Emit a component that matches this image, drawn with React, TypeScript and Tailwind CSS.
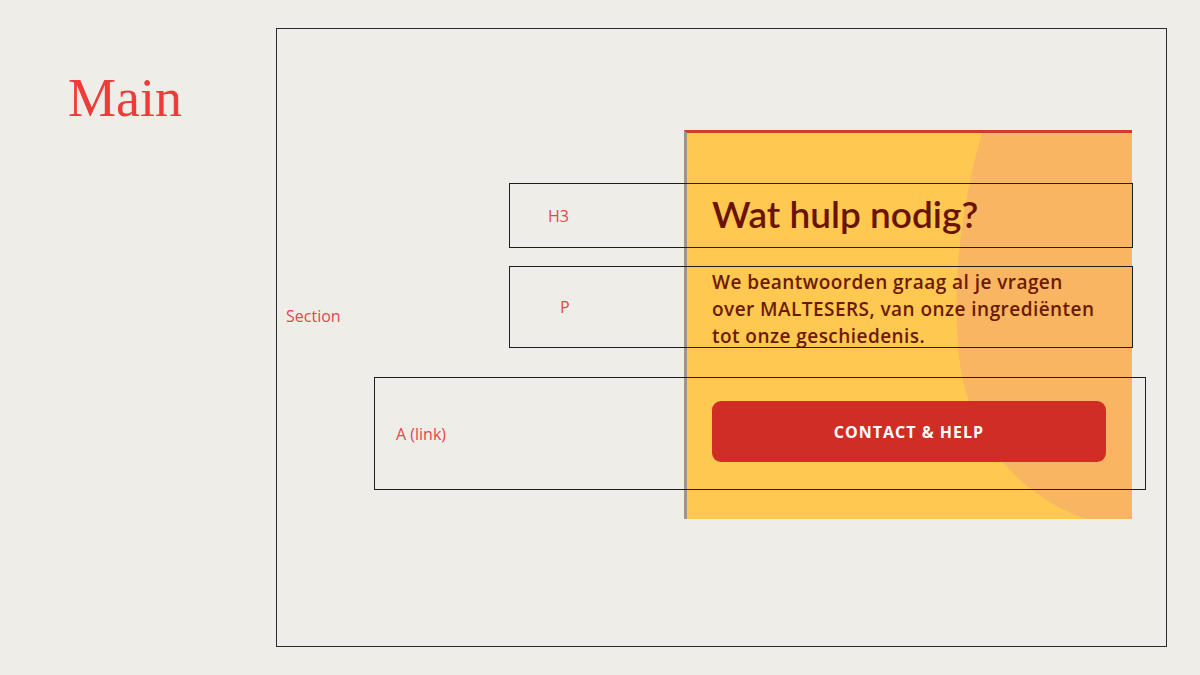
const label = "font-['Open_Sans',sans-serif] text-[16px] leading-none text-[#e4474b]";

function HelpCard() {
  return (
    <div className="relative w-[448px] h-[389px] bg-[#fec851] border-l-[3px] border-l-[#9b958e] border-t-[3px] border-t-[#d23b2b] overflow-hidden">
      <svg className="absolute inset-0" width="448" height="389" viewBox="0 0 448 389">
        <path
          d="M 448 -3 L 299 -3 C 280 60, 268 140, 274 210 C 278 290, 322 360, 410 389 L 448 389 Z"
          transform="translate(-3 0)"
          fill="#f8b562"
        />
      </svg>
      <div className="relative flex flex-col pl-[25px] pt-[59px]">
        <h3 className="font-['Lato',sans-serif] text-[37px] leading-[44px] font-semibold text-[#6b1300]">Wat hulp nodig?</h3>
        <p className="mt-[33px] w-[398px] font-['Open_Sans',sans-serif] text-[19px] leading-[27px] font-semibold tracking-[0.45px] text-[#6b1a00]">
          We beantwoorden graag al je vragen over MALTESERS, van onze ingrediënten tot onze geschiedenis.
        </p>
        <a
          href="#"
          className="mt-[51px] flex h-[61px] w-[394px] items-center justify-center rounded-[9px] bg-[#d02d25] font-['Open_Sans',sans-serif] text-[16px] font-bold tracking-[1px] text-white"
        >
          CONTACT &amp; HELP
        </a>
      </div>
    </div>
  );
}

export default function App() {
  return (
    <div className="flex h-[675px] w-[1200px] overflow-hidden bg-[#efede7]">
      <div className="w-[276px] shrink-0 pl-[68px] pt-[71px]">
        <h1 className="font-['Liberation_Serif',serif] text-[54px] leading-none text-[#ef3b39]">Main</h1>
      </div>
      <section className="relative mt-[28px] h-[619px] w-[891px] shrink-0 border border-[#2b2b2b]">
        <span className={`absolute left-[9px] top-[279px] ${label}`}>Section</span>
        <div className="ml-[407px] mt-[101px]">
          <HelpCard />
        </div>
        {/* annotation boxes */}
        <div className="absolute left-[232px] top-[154px] flex h-[65px] w-[624px] items-center border border-[#1e1e1e] pl-[38px]">
          <span className={label}>H3</span>
        </div>
        <div className="absolute left-[232px] top-[237px] flex h-[82px] w-[624px] items-center border border-[#1e1e1e] pl-[50px]">
          <span className={label}>P</span>
        </div>
        <div className="absolute left-[97px] top-[348px] flex h-[113px] w-[772px] items-center border border-[#1e1e1e] pl-[21px]">
          <span className={label}>A (link)</span>
        </div>
      </section>
    </div>
  );
}
